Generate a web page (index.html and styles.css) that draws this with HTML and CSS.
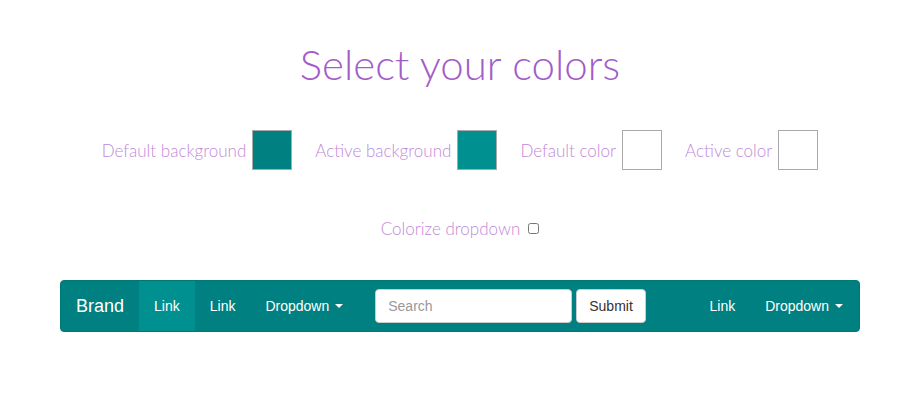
FILE: index.html
```html
<!DOCTYPE html>
<html>
<head>
<meta charset="utf-8">
<link rel="stylesheet" href="styles.css">
</head>
<body>
<div class="page">
  <h1 class="title">Select your colors</h1>
  <div class="pickers">
    <label class="picker"><span>Default background</span><span class="swatch swatch-default"></span></label>
    <label class="picker"><span>Active background</span><span class="swatch swatch-active"></span></label>
    <label class="picker"><span>Default color</span><span class="swatch swatch-white"></span></label>
    <label class="picker"><span>Active color</span><span class="swatch swatch-white"></span></label>
  </div>
  <div class="colorize">
    <label class="colorize-label">Colorize dropdown <input type="checkbox" class="check"></label>
  </div>
  <nav class="navbar">
    <a class="brand">Brand</a>
    <ul class="nav">
      <li class="active"><a>Link</a></li>
      <li><a>Link</a></li>
      <li><a>Dropdown <span class="caret"></span></a></li>
    </ul>
    <form class="search-form">
      <input class="search" type="text" placeholder="Search">
      <button class="btn" type="button">Submit</button>
    </form>
    <ul class="nav nav-right">
      <li><a>Link</a></li>
      <li><a>Dropdown <span class="caret"></span></a></li>
    </ul>
  </nav>
</div>
</body>
</html>
```

FILE: styles.css
```css
html, body {
  margin: 0;
  padding: 0;
  background: #fff;
}
body {
  padding-right: 4px;
  font-family: "Liberation Sans", Arial, sans-serif;
}
.page {
  width: 800px;
  margin: 0 auto;
}
.title {
  margin: 37px 0 0;
  text-align: center;
  font-family: Lato, "Open Sans", sans-serif;
  font-weight: 300;
  font-size: 42px;
  line-height: 54px;
  color: #a25cc9;
}
.pickers {
  display: flex;
  justify-content: center;
  gap: 23px;
  margin-top: 39px;
}
.picker {
  display: flex;
  align-items: center;
  gap: 6px;
  font-family: Lato, "Open Sans", sans-serif;
  font-weight: 300;
  font-size: 17px;
  color: #c18ad8;
}
.swatch {
  width: 38px;
  height: 38px;
  border: 1px solid #a9a9a9;
  display: block;
}
.swatch-default { background: #008080; }
.swatch-active { background: #009090; }
.swatch-white { background: #fff; }
.colorize {
  display: flex;
  justify-content: center;
  margin-top: 48px;
}
.colorize-label {
  display: flex;
  align-items: center;
  gap: 2px;
  font-family: Lato, "Open Sans", sans-serif;
  font-weight: 300;
  font-size: 17px;
  color: #c18ad8;
}
.check {
  width: 11px;
  height: 11px;
  margin: 0 0 0 6px;
}
.navbar {
  margin-top: 41px;
  display: flex;
  align-items: stretch;
  height: 50px;
  background: #008080;
  border: 1px solid #007878;
  border-radius: 4px;
  font-size: 14px;
}
.brand {
  padding: 0 15px;
  display: flex;
  align-items: center;
  font-size: 18px;
  color: #fff;
}
.nav {
  display: flex;
  list-style: none;
  margin: 0;
  padding: 0;
}
.nav li {
  display: flex;
}
.nav a {
  display: flex;
  align-items: center;
  padding: 0 15px;
  color: #fff;
}
.nav .active a {
  background: #009090;
}
.caret {
  display: inline-block;
  width: 0;
  height: 0;
  margin-left: 6px;
  border-top: 4px solid #fff;
  border-left: 4px solid transparent;
  border-right: 4px solid transparent;
}
.search-form {
  display: flex;
  align-items: center;
  gap: 4px;
  padding: 0 15px 0 17px;
}
.search {
  box-sizing: border-box;
  width: 197px;
  height: 34px;
  padding: 6px 12px;
  border: 1px solid #ccc;
  border-radius: 4px;
  font-family: "Liberation Sans", Arial, sans-serif;
  font-size: 14px;
  color: #555;
  background: #fff;
}
.search::placeholder {
  color: #999;
}
.btn {
  box-sizing: border-box;
  height: 34px;
  padding: 6px 12px;
  border: 1px solid #ccc;
  border-radius: 4px;
  background: #fff;
  color: #333;
  font-family: "Liberation Sans", Arial, sans-serif;
  font-size: 14px;
}
.nav-right {
  margin-left: auto;
  margin-right: 1px;
}
```
